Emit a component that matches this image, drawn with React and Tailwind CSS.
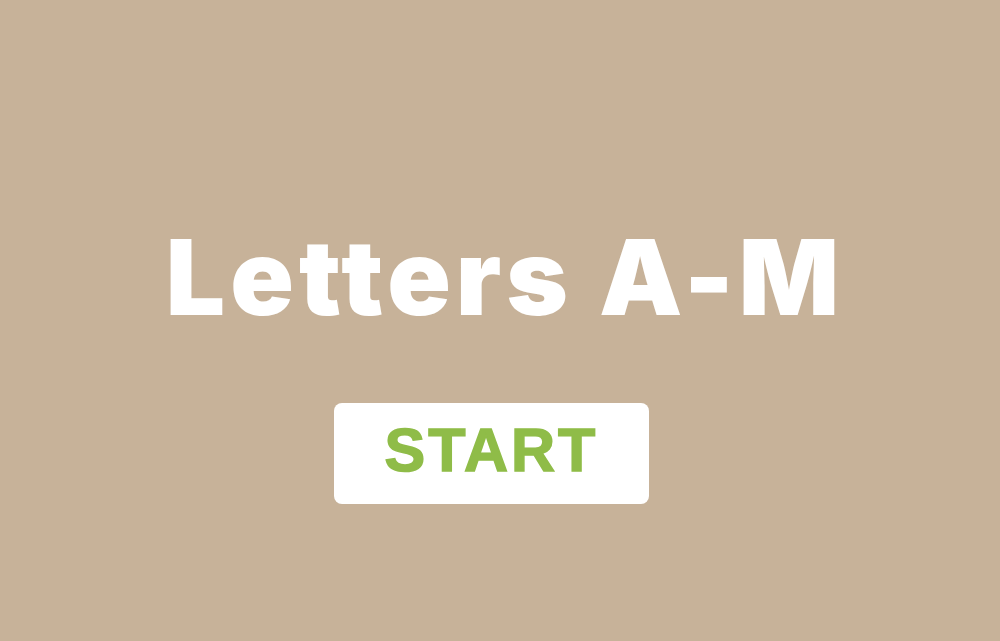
export default function App() {
  return (
    <div className="min-h-screen w-full bg-[#c7b299] flex flex-col items-center pt-[207px]">
      {/* Title */}
      <h1 className="font-['Inter',sans-serif] font-black text-white text-[105px] leading-[140px] tracking-[5px] ml-[10px]">
        Letters A-M
      </h1>
      {/* Start button */}
      <button className="mt-[56px] mr-[17px] w-[315px] h-[101px] bg-white rounded-[8px] flex items-center justify-center pb-[6px]">
        <span className="font-['Liberation_Sans',Arial,sans-serif] font-black text-[#8fbc48] text-[61px] leading-none tracking-[3px] [-webkit-text-stroke:1.5px_#8fbc48]">
          START
        </span>
      </button>
    </div>
  );
}
